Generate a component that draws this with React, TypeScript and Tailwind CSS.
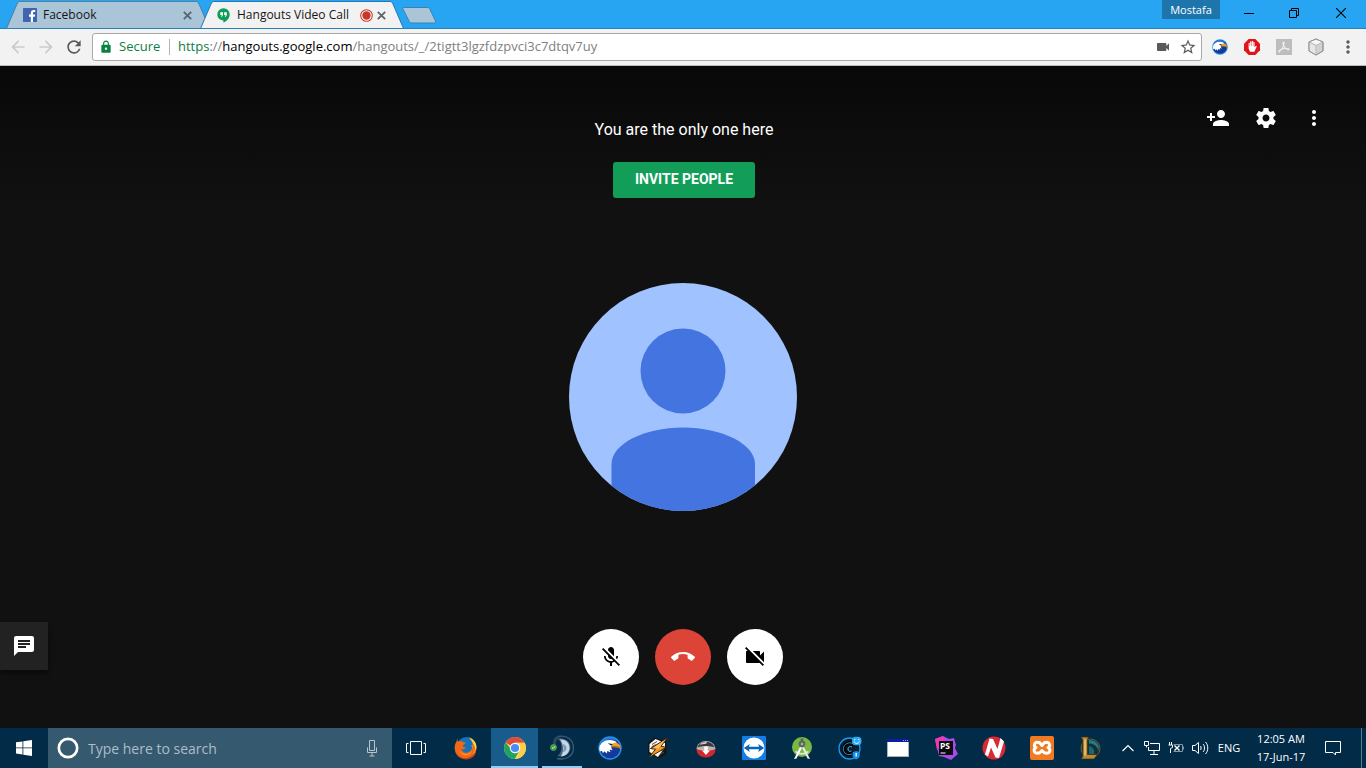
import type { ReactNode } from "react";
import {
  MdArrowBack,
  MdArrowForward,
  MdCallEnd,
  MdChat,
  MdLock,
  MdMicOff,
  MdMoreVert,
  MdPersonAdd,
  MdRefresh,
  MdSettings,
  MdStarBorder,
  MdVideocam,
  MdVideocamOff,
} from "react-icons/md";

const uiFont = "font-['Open_Sans','Noto_Sans',sans-serif]";

function CloseGlyph() {
  return (
    <svg width="9" height="9" viewBox="0 0 9 9" fill="none" stroke="currentColor" strokeWidth="1.8">
      <path d="M.8.8l7.4 7.4M8.2.8L.8 8.2" />
    </svg>
  );
}

function FacebookLogo() {
  return (
    <svg width="14" height="14" viewBox="0 0 14 14">
      <rect width="14" height="14" rx=".6" fill="#3f65b0" />
      <path d="M7.8 14V8.7H6V6.6h1.8V5c0-1.9 1.1-3 2.9-3h1.5v2h-1.1c-.9 0-1.1.4-1.1 1.1v1.5h2.1l-.3 2.1H10V14z" fill="#fff" />
    </svg>
  );
}

function HangoutsLogo() {
  return (
    <svg width="13" height="15" viewBox="0 0 13 15">
      <path d="M6.5.3a6.1 6.1 0 0 0-.1 12.3v2.1c3.700-1.800 6.300-4.900 6.300-8.300A6.100 6.100 0 0 0 6.500.3z" fill="#0f9d58" />
      <path d="M3.300 4.300h2.700v2.800L5 8.800H4l.7-1.700H3.300zM7.100 4.300h2.700v2.800l-1 1.700h-1l.7-1.700H7.100z" fill="#fff" />
    </svg>
  );
}

function EagleIcon({ size }: { size: number }) {
  return (
    <svg width={size} height={size} viewBox="0 0 24 24">
      <circle cx="12" cy="12" r="11.700" fill="#2493ee" />
      <circle cx="12" cy="12" r="10.300" fill="#123a96" />
      <path d="M2 9.500A10.300 10.300 0 0 1 20 5.500L17 4.500C12 2 5 4 2 9.500z" fill="#2b7de0" />
      <path d="M1.300 12C2 7 6.500 4 11.500 4c3.500 0 6 1 7.300 2.600L14.500 9c-1.800 1-1.500 3.200.2 5.200l-3.200-.7 1 2.700-3.300-1.300-.2 2.600-2.800-2.300-1.200 2-1.200-2.500-1.700.7C1.500 14.500 1.200 13.200 1.300 12z" fill="#fff" />
      <path d="M14 8.300c3.200-3 8.700-1.500 8.900 5.200-1.400-2-4.400-2.600-8.600-2.300z" fill="#f6a31c" />
      <path d="M9.800 7.300l5 .8-1.600 1.700z" fill="#1c1c22" />
      <path d="M14.500 10.700c3-.4 5.700-.1 7.800 1.300" stroke="#8f5312" strokeWidth=".8" fill="none" />
    </svg>
  );
}

function AdBlockIcon() {
  return (
    <svg width="16" height="16" viewBox="0 0 16 16">
      <path d="M4.700 0h6.600L16 4.700v6.600L11.300 16H4.700L0 11.300V4.700z" fill="#e0141b" />
      <path d="M4.600 9.500V4.300c0-.8 1.100-.8 1.100 0V7h.4V2.900c0-.9 1.200-.9 1.200 0V7h.4V2.400c0-.8 1.200-.8 1.200 0V7h.4V3.300c0-.8 1.200-.8 1.200 0v5l1-1c.7-.6 1.500 0 1 .8L10.400 12.800H6z" fill="#fff" />
    </svg>
  );
}

function AcrobatIcon() {
  return (
    <svg width="16" height="16" viewBox="0 0 16 16">
      <rect width="16" height="16" fill="#bdbdbd" />
      <path d="M7.500 3c1.600 0 .2 5-3.800 9.500-1 1-1.600-.2-.1-1.200 2-1.500 6-2.200 8.800-1.500 1.500.5.500 1.500-.8 1C9 9.500 6.500 5.500 7 3.500z" fill="none" stroke="#eee" strokeWidth="1.100" />
    </svg>
  );
}

function CubeIcon() {
  return (
    <svg className="shrink-0" width="18" height="18" viewBox="0 0 18 18" stroke="#989898" strokeWidth="1" strokeLinejoin="round">
      <path d="M9 1l7 3v9l-7 4-7-4V4z" fill="#d2d2d2" />
      <path d="M9 1l7 3-7 3.500L2 4z" fill="#f6f6f6" stroke="#bbb" />
      <path d="M2 4l7 3.500V17l-7-4z" fill="#e6e6e6" stroke="#bbb" />
      <path d="M9 1l7 3v9l-7 4-7-4V4z" fill="none" />
    </svg>
  );
}

function Firefox() {
  return (
    <svg width="24" height="24" viewBox="0 0 24 24">
      <circle cx="12.500" cy="11" r="10" fill="#1673b7" />
      <path d="M15 1.500c4 1 7.500 5 7.500 9.500 0 5-3 9-7.500 10 3-4 4-8 2.500-12 1.500 1 2.500 2.500 2.500 2.500-.2-4-2.500-7-5-10z" fill="#ffd33f" />
      <path d="M3.500 2.500c-.3 2 .2 2.600.6 3.100C6 4.600 8 5 9.500 6.200l2.200.2c-.3 1.700-2.700 2-2.700 3.400 0 1.800 1.600 1.800 3 1.500-1 2.500-3.600 2.400-4.700 1.700 1.400 5 8.300 5 10.700-.5.8-1.900.5-4-.2-5.500 3 2 4 5 2.700 8.500-2.900 8.800-13.600 9.300-17.800 3.300C-.3 14.500.3 8 2.600 5.500c0-1.300.3-2.300.9-3z" fill="#f0681a" />
      <path d="M1 13.500c1.500 8 11 11.500 17.500 6 2.300-2 3.500-5 3.500-7.500C24 22 12 27 4.500 20.500 2.500 18.500 1 16 1 13.500z" fill="#cf3d12" />
      <path d="M5 14c3 5 9.500 5.500 13 1-1.500 5-10 6.500-13-1z" fill="#ff9b25" />
    </svg>
  );
}

function Chrome() {
  return (
    <svg width="22" height="22" viewBox="0 0 22 22">
      <circle cx="11" cy="11" r="11" fill="#fdd04b" />
      <path d="M11 11L1.500 5.500A11 11 0 0 1 20.600 5.700H11z" fill="#dd4b3e" />
      <path d="M1.500 5.500A11 11 0 0 0 10.800 22L15.500 13.700 11 11H6.200z" fill="#1ea362" />
      <path d="M11 5.700h9.600A11 11 0 0 1 10.800 22l4.900-8.500z" fill="#fdd04b" />
      <circle cx="11" cy="11" r="5.200" fill="#fff" />
      <circle cx="11" cy="11" r="4.100" fill="#4c8bf5" />
    </svg>
  );
}

function TeamSpeak() {
  return (
    <svg width="26" height="26" viewBox="0 0 26 26">
      <path d="M9 1.500c9-2 15.500 3.500 15.500 11.500S17 25.500 8 23.500" fill="none" stroke="#3e5b77" strokeWidth="1.300" />
      <path d="M8.500 3.500c3 2 4 5.500 4 9s-1.500 6.500-4 8.500c6 1.500 13-1.500 13-8.500S14.500 2 8.500 3.500z" fill="#48637e" />
      <path d="M11 4.500c6-.5 9.500 3.500 9.500 8.500s-4 8-8.500 8.500c3-5 3-11.500-1-17z" fill="#c6d6e8" />
      <path d="M13.500 9c1.500 2 1.500 6 0 8.500 2.500-.7 4-2.500 4-4.500s-1.500-3.500-4-4z" fill="#7d97b5" />
      <path d="M9.500 2C6 3.500 5 6.500 5.500 10" fill="none" stroke="#2f465e" strokeWidth="3" />
      <circle cx="4.500" cy="12.500" r="3" fill="#3a9f36" stroke="#5f9d6a" strokeWidth=".8" />
      <path d="M3 12.500l1.200 1 2-2.300" fill="none" stroke="#d9ffd2" />
    </svg>
  );
}

function Winamp() {
  return (
    <svg width="24" height="24" viewBox="0 0 24 24" strokeLinejoin="round">
      <path d="M9 1.500L20.500 6v12L13 22.500 2 17V7z" fill="#17130f" />
      <path d="M9.500 3l9.500 4v4l-7 10L3.500 16V8z" fill="#f4f4f4" />
      <path d="M6 8.500l5-3M5.500 11l4-2.500M14 18.500l4-2.500M14.500 15l3.500-2" stroke="#55504a" />
      <path d="M22 1.500L4.500 12.500l5 .8-7 8.700L20 11.300l-5-1.200z" fill="#f39521" stroke="#3a260e" strokeWidth="1" />
      <path d="M19.500 3.500L7.500 11.700l5 .8z" fill="#ffc15c" />
    </svg>
  );
}

function Downloader() {
  return (
    <svg width="20" height="20" viewBox="0 0 20 20">
      <ellipse cx="10" cy="12" rx="9.500" ry="7.500" fill="#d22630" />
      <path d="M.5 11C1 6 5 3 10 3s9 3 9.500 8c-5 2-14 2-19 0z" fill="#b9b4b5" />
      <path d="M1.500 9.500C2.500 6 5.500 4 10 4s7.500 2 8.500 5.500c-5-2-12-2-17 0z" fill="#3d3638" />
      <path d="M3.500 7c1.500-2 4-3 6.500-3 1 0 1 1.500 0 1.800C7.500 6 5.500 6.500 3.500 7z" fill="#cfcfcf" />
      <path d="M8.300 8.500h3.400v4H14l-4 4.500-4-4.500h2.300z" fill="#fff" />
    </svg>
  );
}

function TeamViewer() {
  return (
    <svg width="24" height="24" viewBox="0 0 24 24">
      <rect width="24" height="24" rx="1" fill="#147de1" />
      <circle cx="12" cy="12" r="10.500" fill="#fff" />
      <path d="M1.800 12l6-4-.9 2.800h10.200L16.200 8l6 4-6 4 .9-2.800H6.900l.9 2.800z" fill="#0765b8" />
    </svg>
  );
}

function AndroidStudio() {
  return (
    <svg width="24" height="24" viewBox="0 0 24 24">
      <circle cx="12" cy="11" r="10" fill="#79b943" />
      <path d="M5.500 15.500c4 3 9 3 13 0" stroke="#dfe6de" strokeWidth="1.600" fill="none" />
      <path d="M10.500 10l2 .8L6.500 22.500 4 23z" fill="#fff" />
      <path d="M13.500 10l-2 .8 6 11.700 2.500.5z" fill="#e9ecea" />
      <path d="M10.800 2.500h2.400V7h-2.400z" fill="#54615a" />
      <circle cx="12" cy="8" r="3.400" fill="#5d6a62" />
      <circle cx="12" cy="8" r="1.300" fill="#9fb38f" />
    </svg>
  );
}

function GamingC() {
  return (
    <svg width="24" height="24" viewBox="0 0 24 24">
      <circle cx="11.500" cy="12.500" r="10.500" fill="#0e1d2d" stroke="#159cf0" strokeWidth="1.300" />
      <path d="M16 8.500C12 5.500 6 8 6 13c0 4.500 5 6.500 9 3.500" fill="none" stroke="#05080c" strokeWidth="4.500" />
      <path d="M15.500 8C11.500 5 5.300 8 5.300 13c0 4.500 4.500 6.700 8.700 5" fill="none" stroke="#2b8ac0" strokeWidth="1" />
      <path d="M14 11c-2-1.200-4 0-4 2s1.500 3 3.500 2" fill="none" stroke="#5fb9e6" strokeWidth=".9" />
      <rect x="14" y=".8" width="9.500" height="8.500" rx="3.500" fill="#2aa8f5" />
      <path d="M16 5.500c1 2.500 4.500 2.500 5.500 0M16.700 3v1.200M20.800 3v1.200" stroke="#fff" fill="none" />
      <path d="M18.200 15l3.600 1.200v3.300c0 1.700-1.500 3-3.600 4-2.100-1-3.600-2.300-3.600-4v-3.300z" fill="#1591ea" />
      <path d="M18.200 17v3.500" stroke="#dff4ff" strokeWidth="1.500" />
    </svg>
  );
}

function PlainWindow() {
  return (
    <svg width="22" height="18" viewBox="0 0 22 18">
      <rect width="22" height="18" fill="#aab2c0" />
      <rect width="22" height="3" fill="#0a1fa6" />
      <path d="M16 1.500h1M18 1.500h1M20 1.500h1" stroke="#8fa0e8" />
      <rect x="1" y="3" width="20" height="14" fill="#fff" />
    </svg>
  );
}

function PhpStorm() {
  return (
    <svg width="24" height="24" viewBox="0 0 24 24">
      <path d="M1 3l8-3 6 3 5-1 2 7-1 3 3 6-7 6-7-3-5-1-2-8z" fill="#a64be8" />
      <path d="M1 3l8-3 2 5-6 7-2 2z" fill="#ef39ae" />
      <rect x="5" y="5" width="14" height="14" fill="#0b0b0d" />
      <path d="M6.500 17h5" stroke="#fff" />
      <text x="6" y="13" fontSize="8.500" fontWeight="700" fontFamily="Open Sans, sans-serif" fill="#fff">PS</text>
    </svg>
  );
}

function RedN() {
  return (
    <svg width="24" height="24" viewBox="0 0 24 24">
      <circle cx="12" cy="12" r="11.500" fill="#dc2832" />
      <path d="M3 18.500L7.500 2.500l3.500.5 4.500 10L18.500 2l3.500 3.500-5 16.500-3.500-.5-4.500-10-3 9z" fill="#fff" />
    </svg>
  );
}

function Xampp() {
  return (
    <svg width="24" height="24" viewBox="0 0 24 24">
      <rect width="24" height="24" rx="2" fill="#f07b22" />
      <path d="M8 6.500h1.500l2.500 3 2.500-3H16a2.700 2.700 0 0 1 2 5 2.800 2.800 0 0 1-2 5.500h-1.500L12 14.500 9.500 17H8a2.800 2.800 0 0 1-2-5.500 2.700 2.700 0 0 1 2-5z" fill="none" stroke="#fff" strokeWidth="3" strokeLinejoin="round" />
    </svg>
  );
}

function LeagueIcon() {
  return (
    <svg width="24" height="24" viewBox="0 0 24 24">
      <circle cx="12.500" cy="12.500" r="9.500" fill="#10313c" stroke="#7a5a28" strokeWidth="1" />
      <path d="M11 4c7 0 11 5 9.500 10.500-2-5-5-7-9.500-7z" fill="#237b86" />
      <path d="M11 10c4 1 6 4 5 8h-5z" fill="#1c6673" />
      <path d="M3 1h7.500L9.500 3.500V18.500h10l-3.500 4.500H3l1.800-2.500V4z" fill="#b88a36" stroke="#3b2a12" strokeWidth=".7" />
      <path d="M7 3.500v16" stroke="#edcc76" strokeWidth="1.500" />
    </svg>
  );
}

type App = { name: string; icon: ReactNode; state?: "active" | "running" };

const taskbarApps: App[] = [
  { name: "Firefox", icon: <Firefox /> },
  { name: "Google Chrome", icon: <Chrome />, state: "active" },
  { name: "TeamSpeak", icon: <TeamSpeak />, state: "running" },
  { name: "EagleGet", icon: <EagleIcon size={24} /> },
  { name: "Winamp", icon: <Winamp /> },
  { name: "Downloader", icon: <Downloader /> },
  { name: "TeamViewer", icon: <TeamViewer /> },
  { name: "Android Studio", icon: <AndroidStudio /> },
  { name: "Game client", icon: <GamingC /> },
  { name: "Window", icon: <PlainWindow /> },
  { name: "PhpStorm", icon: <PhpStorm /> },
  { name: "Nitro", icon: <RedN /> },
  { name: "XAMPP", icon: <Xampp /> },
  { name: "League of Legends", icon: <LeagueIcon /> },
];

function Tab({ title, icon, active, recording }: { title: string; icon: ReactNode; active?: boolean; recording?: boolean }) {
  return (
    <div className={`relative h-7 w-51 ${active ? "z-10 -ml-2.5" : ""}`}>
      <svg className="absolute inset-0 h-full w-full" viewBox="0 0 204 28" preserveAspectRatio="none">
        <path
          d="M.5 28.500L11 4C12 2 12.500 1.500 14 1.500H190C191.500 1.500 192 2 193 4L203.500 28.500"
          fill={active ? "#f2f2f2" : "#abc5d8"}
          stroke={active ? "#2379b3" : "#4c819f"}
        />
      </svg>
      <div className="relative flex h-full items-center pt-0.5 pr-[18px] pl-[17px]">
        <span className="flex w-5 items-center">{icon}</span>
        <button type="button" role="tab" aria-selected={!!active} className="flex-1 text-left text-[12px] whitespace-nowrap text-[#151515]">
          {title}
        </button>
        {recording && (
          <svg className="mr-1" width="13" height="13" viewBox="0 0 13 13">
            <circle cx="6.500" cy="6.500" r="5.800" fill="#fff" stroke="#c5392b" strokeWidth="1.100" />
            <circle cx="6.500" cy="6.500" r="4.200" fill="#c5392b" />
          </svg>
        )}
        <button type="button" aria-label={`Close ${title}`} className="text-[#5a646c]">
          <CloseGlyph />
        </button>
      </div>
    </div>
  );
}

function TabStrip() {
  return (
    <header className="flex h-7 items-start bg-[#27a4f2]">
      <div role="tablist" className="flex pl-1.5">
        <Tab title="Facebook" icon={<FacebookLogo />} />
        <Tab title="Hangouts Video Call" icon={<HangoutsLogo />} active recording />
      </div>
      <button type="button" aria-label="New tab" className="mt-1.5 -ml-[3px]">
        <svg width="36" height="18" viewBox="0 0 36 18">
          <path d="M3 1.500H26C28 1.500 28.500 2 29 3.500L34.500 15C35 16.500 34.500 17 33 17H11C9 17 8.500 16.500 8 15L2 3C1.500 2 2 1.500 3 1.500Z" fill="#abc5d8" stroke="#3785b4" />
        </svg>
      </button>
      <div className="ml-auto flex items-start text-black">
        <button type="button" className="mr-1.5 h-[19px] w-[58px] bg-[#1e75ab] text-[11px] leading-[18px] text-white">Mostafa</button>
        <button type="button" aria-label="Minimize" className="flex h-[26px] w-[46px] items-center justify-center">
          <svg width="10" height="10" viewBox="0 0 10 10" stroke="currentColor"><path d="M0 5.500h10" /></svg>
        </button>
        <button type="button" aria-label="Restore" className="flex h-[26px] w-11 items-center justify-center">
          <svg width="10" height="10" viewBox="0 0 10 10" fill="none" stroke="currentColor"><path d="M.5 2.500h7v7h-7zM2.500 2.500v-2h7v7h-2" /></svg>
        </button>
        <button type="button" aria-label="Close" className="flex h-[26px] w-[50px] items-center justify-center">
          <svg width="10" height="10" viewBox="0 0 10 10" stroke="currentColor" strokeWidth="1.100"><path d="M0 0l10 10M10 0L0 10" /></svg>
        </button>
      </div>
    </header>
  );
}

function Toolbar() {
  return (
    <div className="flex h-[38px] items-center border-y border-t-[#2b7fb3] border-b-[#b9b9b9] bg-[#f2f2f2] text-[#5a5a5a]">
      <nav className="flex items-center pl-2">
        <button type="button" aria-label="Back" className="w-7 text-[#cbcbcb]"><MdArrowBack size={20} /></button>
        <button type="button" aria-label="Forward" className="w-7 text-[#cbcbcb]"><MdArrowForward size={20} /></button>
        <button type="button" aria-label="Reload" className="w-7"><MdRefresh size={20} /></button>
      </nav>
      <div className="flex h-7 flex-1 items-center rounded-[3px] border border-[#a9a9a9] bg-white pr-1 pl-1.5 text-[13px]">
        <MdLock size={14} className="text-[#0b8043]" />
        <span className="ml-1.5 w-11 text-[#0b8043]">Secure</span>
        <span className="mr-2 ml-1.5 h-4 w-px bg-[#b5b5b5]" />
        <a href="https://hangouts.google.com/hangouts/_/2tigtt3lgzfdzpvci3c7dtqv7uy" className="flex-1 whitespace-nowrap text-[#808080]">
          <span className="text-[#0b8043]">https</span>://<span className="text-black">hangouts.google.com</span>/hangouts/_/2tigtt3lgzfdzpvci3c7dtqv7uy
        </a>
        <button type="button" aria-label="Camera in use" className="mr-2"><MdVideocam size={16} /></button>
        <button type="button" aria-label="Bookmark"><MdStarBorder size={18} /></button>
      </div>
      <div className="flex items-center gap-4 px-2.5">
        <button type="button" aria-label="EagleGet"><EagleIcon size={16} /></button>
        <button type="button" aria-label="AdBlock"><AdBlockIcon /></button>
        <button type="button" aria-label="Acrobat"><AcrobatIcon /></button>
        <button type="button" aria-label="Cube" className="flex w-4 justify-center"><CubeIcon /></button>
        <button type="button" aria-label="Menu" className="flex w-4 justify-center"><MdMoreVert size={20} className="shrink-0" /></button>
      </div>
    </div>
  );
}

function Avatar() {
  return (
    <svg className="justify-self-center" width="228" height="228" viewBox="0 0 228 228">
      <clipPath id="avatar-clip"><circle cx="114" cy="114" r="114" /></clipPath>
      <g clipPath="url(#avatar-clip)">
        <rect width="228" height="228" fill="#a0c2ff" />
        <circle cx="114" cy="88" r="42.500" fill="#4374e0" />
        <path d="M42.500 228V181C42.500 161 75 144.500 114 144.500S186 161 186 181V228Z" fill="#4374e0" />
      </g>
    </svg>
  );
}

function CallStage() {
  const round = "flex size-14 items-center justify-center rounded-full";
  return (
    <main className="grid flex-1 grid-rows-[1fr_auto_1fr] bg-[#111] bg-[linear-gradient(#080808,#111_140px)] font-[Roboto,sans-serif]">
      <div className="grid grid-cols-[1fr_auto_1fr] items-start">
        <div className="col-start-2 flex flex-col items-center pt-[52px] pl-0.5">
          <h1 className="text-base leading-6 text-white">You are the only one here</h1>
          <button type="button" className="mt-5 h-9 rounded-[3px] bg-[#129e58] px-[22px] pb-0.5 text-sm font-bold text-white uppercase">
            Invite people
          </button>
        </div>
        <div className="flex justify-end pt-7 pr-7 text-white">
          <button type="button" aria-label="Add people" className="flex size-12 items-center justify-center"><MdPersonAdd size={24} /></button>
          <button type="button" aria-label="Settings" className="flex size-12 items-center justify-center">
            <svg width="24" height="24" viewBox="0 0 24 24" fill="currentColor">
              <path d="M19.430 12.980c.04-.32.07-.64.07-.98s-.03-.66-.07-.98l2.110-1.650c.19-.15.24-.42.12-.64l-2-3.460c-.12-.22-.39-.3-.61-.22l-2.490 1c-.52-.4-1.080-.73-1.690-.98l-.38-2.650C14.460 2.180 14.250 2 14 2h-4c-.25 0-.46.18-.49.42l-.38 2.650c-.61.25-1.170.59-1.690.98l-2.490-1c-.23-.09-.49 0-.61.22l-2 3.460c-.13.22-.07.49.12.64l2.110 1.650c-.04.32-.07.65-.07.98s.03.66.07.98l-2.110 1.650c-.19.15-.24.42-.12.64l2 3.460c.12.22.39.3.61.22l2.490-1c.52.4 1.080.73 1.690.98l.38 2.650c.03.24.24.42.49.42h4c.25 0 .46-.18.49-.42l.38-2.650c.61-.25 1.170-.59 1.690-.98l2.490 1c.23.09.49 0 .61-.22l2-3.460c.12-.22.07-.49-.12-.64l-2.110-1.650zM12 15.500c-1.930 0-3.500-1.570-3.500-3.500s1.570-3.500 3.500-3.500 3.500 1.570 3.500 3.500-1.570 3.500-3.500 3.500z" />
            </svg>
          </button>
          <button type="button" aria-label="More options" className="flex size-12 items-center justify-center"><MdMoreVert size={24} /></button>
        </div>
      </div>
      <Avatar />
      <div className="grid grid-cols-[1fr_auto_1fr] items-end">
        <button type="button" aria-label="Chat" className="mb-[58px] flex size-12 items-center justify-center bg-[#222] text-white shadow-md shadow-black/40">
          <MdChat size={24} />
        </button>
        <div className="flex gap-4 pb-[43px]">
          <button type="button" aria-label="Mute microphone" className={`${round} bg-white text-black`}><MdMicOff size={24} /></button>
          <button type="button" aria-label="Leave call" className={`${round} bg-[#db4437] text-white`}><MdCallEnd size={24} /></button>
          <button type="button" aria-label="Turn off camera" className={`${round} bg-white text-black`}><MdVideocamOff size={24} /></button>
        </div>
      </div>
    </main>
  );
}

function Taskbar() {
  return (
    <footer className="flex h-10 items-stretch bg-[#012b47] text-white">
      <button type="button" aria-label="Start" className="flex w-12 items-center justify-center">
        <svg width="16" height="16" viewBox="0 0 16 16" fill="#fff">
          <path d="M0 2.300L6.500 1.400V7.500H0zM7.300 1.300L16 0V7.500H7.300zM0 8.300H6.500V14.500L0 13.600zM7.300 8.300H16V16L7.300 14.700z" />
        </svg>
      </button>
      <label className="flex w-86 items-center bg-[#35596f] pr-3 pl-2">
        <svg width="24" height="24" viewBox="0 0 24 24" fill="none"><circle cx="12" cy="12" r="9.200" stroke="#fff" strokeWidth="2.700" /></svg>
        <input aria-label="Search" placeholder="Type here to search" className="ml-2 min-w-0 flex-1 bg-transparent pt-0.5 text-sm outline-none placeholder:text-[#aebdc7]" />
        <svg width="16" height="18" viewBox="0 0 16 18" fill="none" stroke="#b8c5ce">
          <path d="M5.500 1.500h5v10h-5zM3.500 8.500v5h9V8.500M8 14v3M5.500 17h5" />
        </svg>
      </label>
      <button type="button" aria-label="Task view" className="flex w-12 items-center justify-center">
        <svg width="20" height="14" viewBox="0 0 20 14" fill="none" stroke="#fff"><path d="M4.500.5h11v13h-11zM2.500 2.500h-2v9h2M17.500 2.500h2v9h-2" /></svg>
      </button>
      <div className="flex pl-0.5">
        {taskbarApps.map((app) => (
          <button
            key={app.name}
            type="button"
            aria-label={app.name}
            className={`relative flex w-12 items-center justify-center ${app.state === "active" ? "border-l border-l-[#012b47] bg-[#175c8b]" : ""}`}
          >
            {app.icon}
            {app.state === "active" && <span className="absolute inset-x-0 bottom-0 h-0.5 bg-[#8fcdf5]" />}
            {app.state === "running" && <span className="absolute inset-x-1 bottom-0 h-0.5 bg-[#8fcdf5]" />}
          </button>
        ))}
      </div>
      <div className="ml-auto flex items-center">
        <button type="button" aria-label="Show hidden icons" className="flex w-6 justify-center">
          <svg width="14" height="8" viewBox="0 0 14 8" fill="none" stroke="#fff" strokeWidth="1.200"><path d="M1.500 7L7 1.500 12.500 7" /></svg>
        </button>
        <button type="button" aria-label="Network" className="flex w-6 justify-center">
          <svg width="16" height="14" viewBox="0 0 16 14" fill="none" stroke="#fff">
            <path d="M6 2.500h9.500v7H4.500V6M10 10v3M6 13.500h8M.5.500h4v4h-4zM2.500 4.500v2" />
          </svg>
        </button>
        <button type="button" aria-label="Battery" className="flex w-6 justify-center">
          <svg width="16" height="12" viewBox="0 0 16 12" fill="none" stroke="#fff">
            <path d="M5.500 2.500h9v7h-9M15.500 4.500v3" stroke="#8195a3" />
            <path d="M1.500 0v3M3.500 0v3M.5 3h4v2.500l-2 1V11" />
            <path d="M6.500 3.500l5 5M11.500 3.500l-5 5" strokeWidth="1.400" />
          </svg>
        </button>
        <button type="button" aria-label="Volume" className="flex w-6 justify-center">
          <svg width="17" height="14" viewBox="0 0 17 14" fill="none" stroke="#fff">
            <path d="M.5 4.500h2.500l3.500-3v11L3 9.500H.5zM8.500 5c.8 1 .8 3 0 4M11 3c2 2 2 6 0 8M13.500 1c3 3 3 9 0 12" />
          </svg>
        </button>
        <button type="button" className="w-[34px] text-[11px]">ENG</button>
        <button type="button" className="w-[70px] text-center text-[11px] leading-[18px]">
          <time className="block">12:05 AM</time>
          <time className="block">17-Jun-17</time>
        </button>
        <button type="button" aria-label="Notifications" className="flex w-[34px] justify-center">
          <svg width="16" height="16" viewBox="0 0 16 16" fill="none" stroke="#fff"><path d="M.5 1.500h15v11h-5v2.500L8 12.500H.5z" /></svg>
        </button>
        <button type="button" aria-label="Show desktop" className="ml-[11px] h-10 w-[5px] border-l border-[#60798a]" />
      </div>
    </footer>
  );
}

export default function App() {
  return (
    <div className={`flex min-h-screen flex-col overflow-x-hidden bg-[#111] ${uiFont}`}>
      <TabStrip />
      <Toolbar />
      <CallStage />
      <Taskbar />
    </div>
  );
}
